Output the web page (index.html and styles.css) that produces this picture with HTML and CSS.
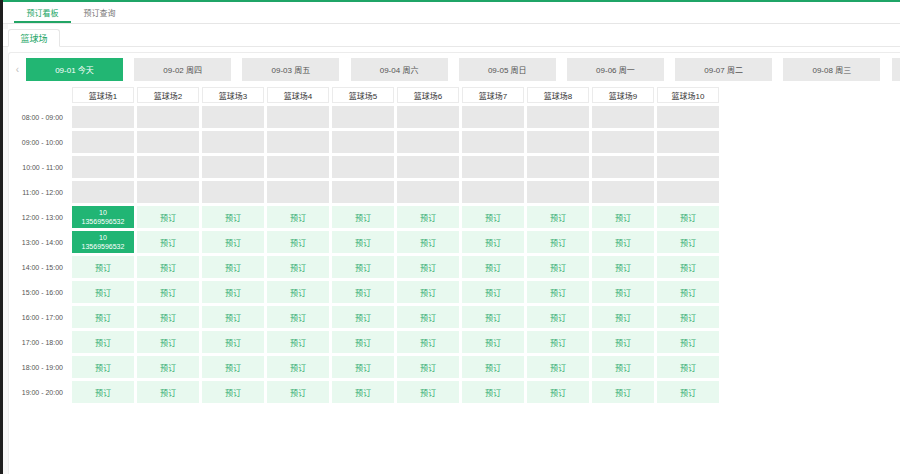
FILE: index.html
```html
<!DOCTYPE html>
<html lang="zh-CN">
<head>
<meta charset="utf-8">
<title>预订看板</title>
<link rel="stylesheet" href="styles.css">
</head>
<body>
<div class="app">
  <div class="strip"></div>
  <div class="main">
    <nav class="topnav">
      <a class="tab active">预订看板</a>
      <a class="tab">预订查询</a>
    </nav>
    <div class="content">
      <div class="subtabs"><span class="subtab">篮球场</span></div>
      <div class="panel">
        <div class="dates">
          <span class="arrow">‹</span>
          <div class="date active">09-01 今天</div>
          <div class="date">09-02 周四</div>
          <div class="date">09-03 周五</div>
          <div class="date">09-04 周六</div>
          <div class="date">09-05 周日</div>
          <div class="date">09-06 周一</div>
          <div class="date">09-07 周二</div>
          <div class="date">09-08 周三</div>
          <div class="date"></div>
        </div>
        <div class="grid">
          <div class="corner"></div>
          <div class="head">篮球场1</div><div class="head">篮球场2</div><div class="head">篮球场3</div><div class="head">篮球场4</div><div class="head">篮球场5</div><div class="head">篮球场6</div><div class="head">篮球场7</div><div class="head">篮球场8</div><div class="head">篮球场9</div><div class="head">篮球场10</div>

          <div class="time">08:00 - 09:00</div>
          <div class="cell off"></div><div class="cell off"></div><div class="cell off"></div><div class="cell off"></div><div class="cell off"></div><div class="cell off"></div><div class="cell off"></div><div class="cell off"></div><div class="cell off"></div><div class="cell off"></div>

          <div class="time">09:00 - 10:00</div>
          <div class="cell off"></div><div class="cell off"></div><div class="cell off"></div><div class="cell off"></div><div class="cell off"></div><div class="cell off"></div><div class="cell off"></div><div class="cell off"></div><div class="cell off"></div><div class="cell off"></div>

          <div class="time">10:00 - 11:00</div>
          <div class="cell off"></div><div class="cell off"></div><div class="cell off"></div><div class="cell off"></div><div class="cell off"></div><div class="cell off"></div><div class="cell off"></div><div class="cell off"></div><div class="cell off"></div><div class="cell off"></div>

          <div class="time">11:00 - 12:00</div>
          <div class="cell off"></div><div class="cell off"></div><div class="cell off"></div><div class="cell off"></div><div class="cell off"></div><div class="cell off"></div><div class="cell off"></div><div class="cell off"></div><div class="cell off"></div><div class="cell off"></div>

          <div class="time">12:00 - 13:00</div>
          <div class="cell booked"><span>10</span><span>13569596532</span></div><div class="cell free">预订</div><div class="cell free">预订</div><div class="cell free">预订</div><div class="cell free">预订</div><div class="cell free">预订</div><div class="cell free">预订</div><div class="cell free">预订</div><div class="cell free">预订</div><div class="cell free">预订</div>

          <div class="time">13:00 - 14:00</div>
          <div class="cell booked"><span>10</span><span>13569596532</span></div><div class="cell free">预订</div><div class="cell free">预订</div><div class="cell free">预订</div><div class="cell free">预订</div><div class="cell free">预订</div><div class="cell free">预订</div><div class="cell free">预订</div><div class="cell free">预订</div><div class="cell free">预订</div>

          <div class="time">14:00 - 15:00</div>
          <div class="cell free">预订</div><div class="cell free">预订</div><div class="cell free">预订</div><div class="cell free">预订</div><div class="cell free">预订</div><div class="cell free">预订</div><div class="cell free">预订</div><div class="cell free">预订</div><div class="cell free">预订</div><div class="cell free">预订</div>

          <div class="time">15:00 - 16:00</div>
          <div class="cell free">预订</div><div class="cell free">预订</div><div class="cell free">预订</div><div class="cell free">预订</div><div class="cell free">预订</div><div class="cell free">预订</div><div class="cell free">预订</div><div class="cell free">预订</div><div class="cell free">预订</div><div class="cell free">预订</div>

          <div class="time">16:00 - 17:00</div>
          <div class="cell free">预订</div><div class="cell free">预订</div><div class="cell free">预订</div><div class="cell free">预订</div><div class="cell free">预订</div><div class="cell free">预订</div><div class="cell free">预订</div><div class="cell free">预订</div><div class="cell free">预订</div><div class="cell free">预订</div>

          <div class="time">17:00 - 18:00</div>
          <div class="cell free">预订</div><div class="cell free">预订</div><div class="cell free">预订</div><div class="cell free">预订</div><div class="cell free">预订</div><div class="cell free">预订</div><div class="cell free">预订</div><div class="cell free">预订</div><div class="cell free">预订</div><div class="cell free">预订</div>

          <div class="time">18:00 - 19:00</div>
          <div class="cell free">预订</div><div class="cell free">预订</div><div class="cell free">预订</div><div class="cell free">预订</div><div class="cell free">预订</div><div class="cell free">预订</div><div class="cell free">预订</div><div class="cell free">预订</div><div class="cell free">预订</div><div class="cell free">预订</div>

          <div class="time">19:00 - 20:00</div>
          <div class="cell free">预订</div><div class="cell free">预订</div><div class="cell free">预订</div><div class="cell free">预订</div><div class="cell free">预订</div><div class="cell free">预订</div><div class="cell free">预订</div><div class="cell free">预订</div><div class="cell free">预订</div><div class="cell free">预订</div>
        </div>
      </div>
    </div>
  </div>
</div>
</body>
</html>
```

FILE: styles.css
```css
* { box-sizing: border-box; }
html, body {
  margin: 0;
  padding: 0;
  height: 100%;
  background: #ffffff;
  font-family: "Liberation Sans", "Noto Sans CJK SC", sans-serif;
  color: #333;
}
.app {
  display: flex;
  height: 474px;
  overflow: hidden;
}
.strip {
  width: 3px;
  flex-shrink: 0;
  background: #1e1e1e;
}
.main {
  flex: 1;
  min-width: 0;
  overflow: hidden;
  border-top: 2px solid #1fa567;
  display: flex;
  flex-direction: column;
}
.topnav {
  display: flex;
  height: 22px;
  padding-left: 11px;
  border-bottom: 1px solid #e6e6e6;
  flex-shrink: 0;
}
.tab {
  width: 57px;
  display: flex;
  align-items: center;
  justify-content: center;
  font-size: 8px;
  color: #777;
}
.tab.active {
  color: #22a565;
  box-shadow: inset 0 -2px 0 #22a565;
}
.content {
  flex: 1;
  padding: 5px 0 0 5px;
  background: linear-gradient(to right, #f7f7f7 0, #f7f7f7 5px, #ffffff 5px);
  display: flex;
  flex-direction: column;
}
.subtabs {
  display: flex;
  height: 18px;
  border-bottom: 1px solid #e8e8e8;
  margin-left: -5px;
  padding-left: 5px;
  background: #fff;
}
.subtab {
  width: 52px;
  height: 18px;
  display: flex;
  align-items: center;
  justify-content: center;
  font-size: 9px;
  color: #22a565;
  border: 1px solid #e6e6e6;
  border-bottom-color: #fff;
  border-radius: 3px 3px 0 0;
  background: #fff;
}
.panel {
  margin-top: 5px;
  flex: 1;
  width: calc(100% + 40px);
  border: 1px solid #ececec;
  border-right: none;
  border-bottom: none;
  border-radius: 3px 0 0 0;
  background: #fff;
  padding-top: 5px;
}
.dates {
  display: flex;
  align-items: center;
  height: 23px;
}
.arrow {
  width: 17px;
  flex-shrink: 0;
  text-align: center;
  font-size: 10px;
  color: #bdbdbd;
  line-height: 23px;
}
.date {
  width: 97px;
  height: 23px;
  flex-shrink: 0;
  margin-right: 11.2px;
  background: #e9e9e9;
  color: #555;
  font-size: 8px;
  display: flex;
  align-items: center;
  justify-content: center;
}
.date.active {
  background: #22b673;
  color: #fff;
}
.grid {
  margin-top: 6px;
  display: grid;
  grid-template-columns: 60px repeat(10, 62px);
  grid-template-rows: 16px repeat(12, 22px);
  gap: 3px;
}
.head {
  border: 1px solid #ebebeb;
  background: #fff;
  font-size: 8px;
  color: #333;
  display: flex;
  align-items: center;
  justify-content: center;
}
.time {
  font-size: 7px;
  color: #555;
  display: flex;
  align-items: center;
  justify-content: flex-end;
  padding-right: 6px;
}
.cell {
  display: flex;
  align-items: center;
  justify-content: center;
  font-size: 8px;
}
.cell.off {
  background: #e8e8e8;
}
.cell.free {
  background: #e8f9ef;
  color: #35ad6f;
}
.cell.booked {
  background: #21b574;
  color: #fff;
  flex-direction: column;
  font-size: 7px;
  line-height: 9px;
}
```
